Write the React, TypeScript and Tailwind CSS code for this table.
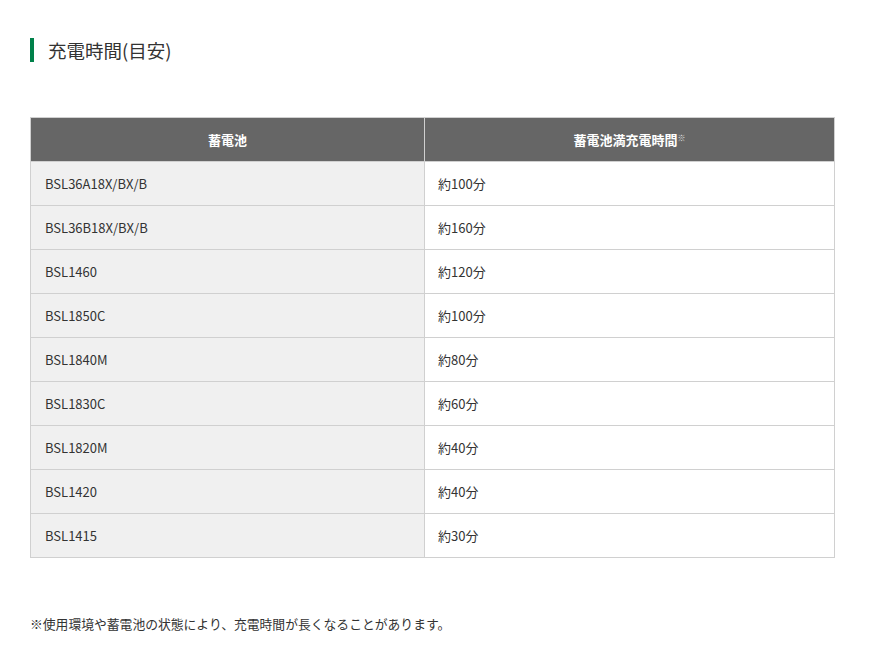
import React from 'react';

const rows: [string, string][] = [
  ['BSL36A18X/BX/B', '約100分'],
  ['BSL36B18X/BX/B', '約160分'],
  ['BSL1460', '約120分'],
  ['BSL1850C', '約100分'],
  ['BSL1840M', '約80分'],
  ['BSL1830C', '約60分'],
  ['BSL1820M', '約40分'],
  ['BSL1420', '約40分'],
  ['BSL1415', '約30分'],
];

const App: React.FC = () => {
  return (
    <div
      className="min-h-screen bg-white text-[#333] px-[30px] pt-[38px]"
      style={{ fontFamily: '"Noto Sans CJK JP", "Noto Sans", sans-serif' }}
    >
      <h2 className="flex items-center h-[24px] border-l-4 border-[#00814a] pl-[14px] text-[18.5px] leading-none font-normal">
        充電時間(目安)
      </h2>

      <table className="mt-[55px] w-[805px] border-collapse text-[13px]">
        <thead>
          <tr className="bg-[#666] text-white">
            <th className="w-[394px] h-[44px] border border-[#d0d0d0] font-bold">蓄電池</th>
            <th className="h-[44px] border border-[#d0d0d0] font-bold">
              蓄電池満充電時間<sup className="text-[8px] text-[#e0e0e0] font-normal">※</sup>
            </th>
          </tr>
        </thead>
        <tbody>
          {rows.map(([name, time]) => (
            <tr key={name}>
              <td className="h-[44px] border border-[#d0d0d0] bg-[#f0f0f0] pl-[14px]">{name}</td>
              <td className="h-[44px] border border-[#d0d0d0] bg-white pl-[13px]">{time}</td>
            </tr>
          ))}
        </tbody>
      </table>

      <p className="mt-[56px] text-[12.8px]">※使用環境や蓄電池の状態により、充電時間が長くなることがあります。</p>
    </div>
  );
};

export default App;
